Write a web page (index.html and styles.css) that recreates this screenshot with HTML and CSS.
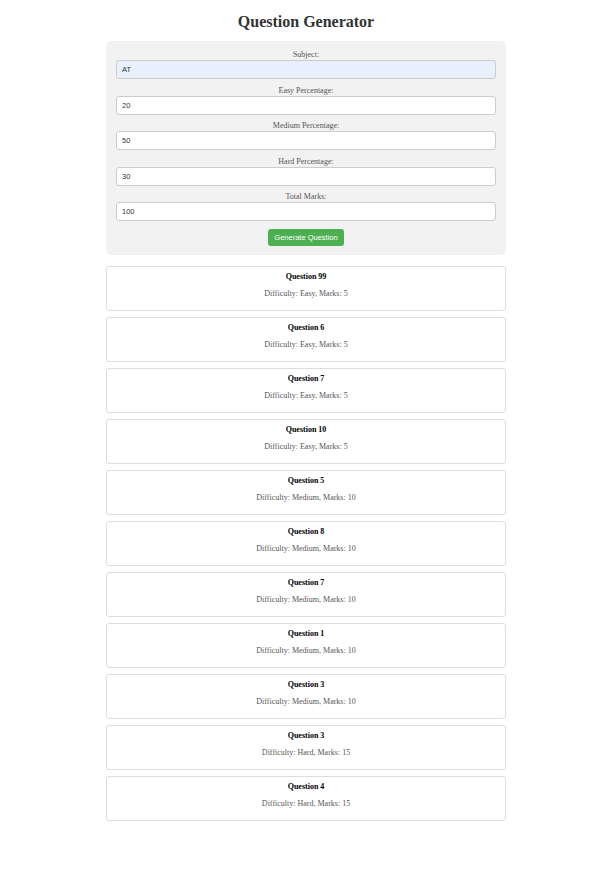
FILE: index.html
```html
<!DOCTYPE html>
<html>
<head>
<meta charset="utf-8">
<link rel="stylesheet" href="styles.css">
</head>
<body>
<div class="wrap">
  <h1 class="title">Question Generator</h1>
  <form class="form">
    <label class="label">Subject:</label>
    <input class="input autofill" value="AT">
    <label class="label">Easy Percentage:</label>
    <input class="input" value="20">
    <label class="label">Medium Percentage:</label>
    <input class="input" value="50">
    <label class="label">Hard Percentage:</label>
    <input class="input" value="30">
    <label class="label">Total Marks:</label>
    <input class="input" value="100">
    <button type="button" class="btn">Generate Question</button>
  </form>
  <div class="list">
    <div class="card"><h3 class="q">Question 99</h3><p class="meta">Difficulty: Easy, Marks: 5</p></div>
    <div class="card"><h3 class="q">Question 6</h3><p class="meta">Difficulty: Easy, Marks: 5</p></div>
    <div class="card"><h3 class="q">Question 7</h3><p class="meta">Difficulty: Easy, Marks: 5</p></div>
    <div class="card"><h3 class="q">Question 10</h3><p class="meta">Difficulty: Easy, Marks: 5</p></div>
    <div class="card"><h3 class="q">Question 5</h3><p class="meta">Difficulty: Medium, Marks: 10</p></div>
    <div class="card"><h3 class="q">Question 8</h3><p class="meta">Difficulty: Medium, Marks: 10</p></div>
    <div class="card"><h3 class="q">Question 7</h3><p class="meta">Difficulty: Medium, Marks: 10</p></div>
    <div class="card"><h3 class="q">Question 1</h3><p class="meta">Difficulty: Medium, Marks: 10</p></div>
    <div class="card"><h3 class="q">Question 3</h3><p class="meta">Difficulty: Medium, Marks: 10</p></div>
    <div class="card"><h3 class="q">Question 3</h3><p class="meta">Difficulty: Hard, Marks: 15</p></div>
    <div class="card"><h3 class="q">Question 4</h3><p class="meta">Difficulty: Hard, Marks: 15</p></div>
  </div>
</div>
</body>
</html>
```

FILE: styles.css
```css
html, body {
  margin: 0;
  padding: 0;
  background: #fff;
  font-family: "Liberation Serif", "Times New Roman", serif;
}
.wrap {
  width: 400px;
  margin-left: 106px;
  padding-top: 12px;
}
.title {
  margin: 0 0 9px;
  font-size: 16px;
  line-height: 20px;
  text-align: center;
  color: #333;
  font-weight: bold;
}
.form {
  background: #f2f2f2;
  border-radius: 5px;
  padding: 9px 10px 9px;
  display: flex;
  flex-direction: column;
  align-items: stretch;
}
.label {
  display: block;
  text-align: center;
  font-size: 8px;
  line-height: 10px;
  color: #555;
  margin-bottom: 0;
}
.input {
  box-sizing: border-box;
  height: 19px;
  margin: 0 0 6.5px;
  padding: 0 5px;
  border: 1px solid #ccc;
  border-radius: 3px;
  background: #fff;
  font-family: "Liberation Sans", Arial, sans-serif;
  font-size: 7.5px;
  color: #333;
  outline: none;
}
.autofill {
  background: #e8f0fe;
}
.btn {
  align-self: center;
  margin-top: 1.5px;
  width: 76px;
  height: 17px;
  border: none;
  border-radius: 3px;
  background: #4caf50;
  color: #fff;
  font-family: "Liberation Sans", Arial, sans-serif;
  font-size: 7.5px;
  padding: 0;
}
.list {
  margin-top: 11px;
  display: flex;
  flex-direction: column;
  gap: 6px;
}
.card {
  box-sizing: border-box;
  height: 45px;
  border: 1px solid #ddd;
  border-radius: 3px;
  padding: 5px 10px;
  text-align: center;
}
.q {
  margin: 0;
  font-size: 8px;
  line-height: 10px;
  font-weight: bold;
  color: #000;
}
.meta {
  margin: 7px 0 0;
  font-size: 8px;
  line-height: 10px;
  color: #555;
}
```
